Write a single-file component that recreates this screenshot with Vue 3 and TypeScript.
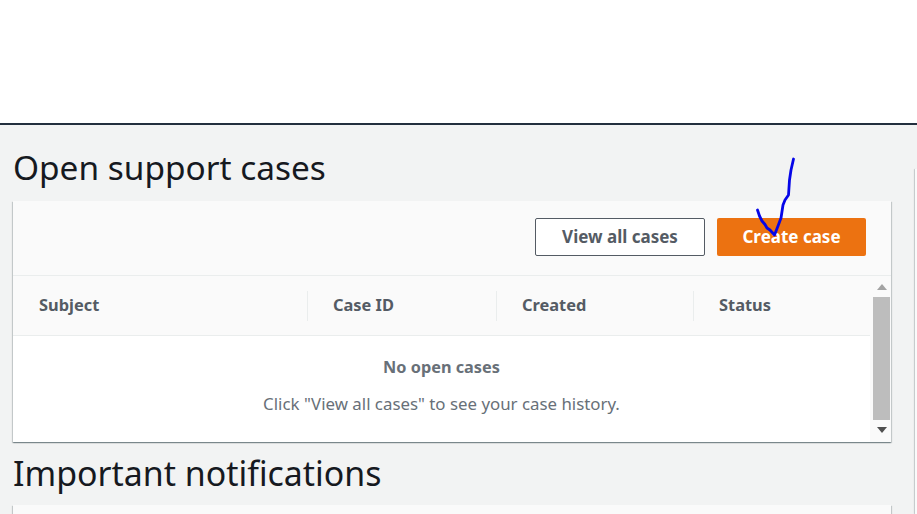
<script setup lang="ts">
const columns: string[] = ['Subject', 'Case ID', 'Created', 'Status']
</script>

<template>
  <div class="page">
    <header class="top"></header>
    <main class="content">
      <h2 class="heading first">Open support cases</h2>
      <section class="panel">
        <div class="actions">
          <button class="btn ghost">View all cases</button>
          <button class="btn primary">Create case</button>
        </div>
        <div class="table-wrap">
          <div class="table">
            <div class="thead">
              <div v-for="c in columns" :key="c" class="th"><span>{{ c }}</span></div>
            </div>
            <div class="empty">
              <strong>No open cases</strong>
              <p>Click "View all cases" to see your case history.</p>
            </div>
          </div>
          <div class="scrollbar">
            <svg class="arrow" width="10" height="6" viewBox="0 0 10 6"><path d="M5 0 10 6H0Z" fill="#a3a3a3" /></svg>
            <div class="thumb"></div>
            <svg class="arrow" width="10" height="6" viewBox="0 0 10 6"><path d="M0 0H10L5 6Z" fill="#505050" /></svg>
          </div>
        </div>
      </section>
      <h2 class="heading second">Important notifications</h2>
      <section class="panel stub"></section>
    </main>
    <div class="side-panel"></div>
    <svg class="ink" width="60" height="90" viewBox="750 150 60 90">
      <path d="M757.5 210 L759.5 216 L762 221 L765 224.500 L767 228 L770 230 L774.500 235 L778 226 L781 218 L783 205 L785 200 L788.500 195 L789.500 180 L791 170 L793.500 159" fill="none" stroke="#0606e8" stroke-width="2.8" stroke-linecap="round" stroke-linejoin="round" />
    </svg>
  </div>
</template>

<style>
html, body { margin: 0; background: #fff; }
</style>

<style scoped>
.page {
  position: relative;
  width: 917px;
  height: 514px;
  overflow: hidden;
  font-family: "Noto Sans", "Open Sans", sans-serif;
  background: #f2f3f3;
}
.top {
  height: 123px;
  background: #fff;
  border-bottom: 2px solid #232f3e;
}
.content { padding: 0 26px 0 13px; }
.heading {
  margin: 0;
  font-weight: 400;
  line-height: 40px;
  color: #16191f;
}
.first { padding-top: 22px; height: 54px; font-size: 33.4px; }
.second { padding-top: 11px; height: 52px; font-size: 33.9px; }
.panel {
  background: #fafafa;
  box-shadow: 0 1px 1px 0 rgba(0, 28, 36, .3), 1px 1px 1px 0 rgba(0, 28, 36, .15), -1px 1px 1px 0 rgba(0, 28, 36, .15);
}
.actions {
  height: 75px;
  padding: 17px 25px 0 0;
  box-sizing: border-box;
  display: flex;
  justify-content: flex-end;
  gap: 12px;
  border-bottom: 1px solid #eaeded;
}
.btn {
  height: 38px;
  border-radius: 2px;
  font: 700 17px/20px "Noto Sans", "Open Sans", sans-serif;
  padding: 0;
}
.ghost { width: 170px; background: #fff; border: 1px solid #545b64; color: #545b64; }
.primary { width: 149px; background: #ec7211; border: 0; color: #fff; }
.table-wrap { display: flex; height: 166px; }
.table { width: 857px; background: #fff; }
.thead {
  display: grid;
  grid-template-columns: 294px 189px 197px 177px;
  height: 60px;
  background: #fafafa;
  border-bottom: 1px solid #eaeded;
  box-sizing: border-box;
  align-items: center;
}
.th {
  height: 30px;
  display: flex;
  align-items: center;
  padding: 0 0 2px 25px;
  font-size: 16.4px;
  font-weight: 700;
  color: #545b64;
  border-left: 1px solid #eaeded;
  box-sizing: border-box;
}
.th:first-child { border-left: 0; padding-left: 26px; }
.empty { text-align: center; padding-top: 19px; color: #687078; font-size: 16.85px; }
.empty strong { display: block; font-size: 16.3px; line-height: 24px; color: #687078; }
.empty p { margin: 13px 0 0; line-height: 24px; }
.scrollbar {
  width: 21px;
  background: #fafafa;
  display: flex;
  flex-direction: column;
  align-items: center;
  box-sizing: border-box;
  padding: 8px 1px 0 3px;
}
.thumb { width: 17px; height: 123px; margin: 7px 0 7px; background: #bdbdbd; }
.stub { height: 40px; }
.side-panel {
  position: absolute;
  left: 915px;
  top: 169px;
  width: 2px;
  height: 345px;
  background: #fafafa;
  box-shadow: -1px 0 1px 0 rgba(0, 28, 36, .2);
}
.ink { position: absolute; left: 750px; top: 150px; }
</style>
